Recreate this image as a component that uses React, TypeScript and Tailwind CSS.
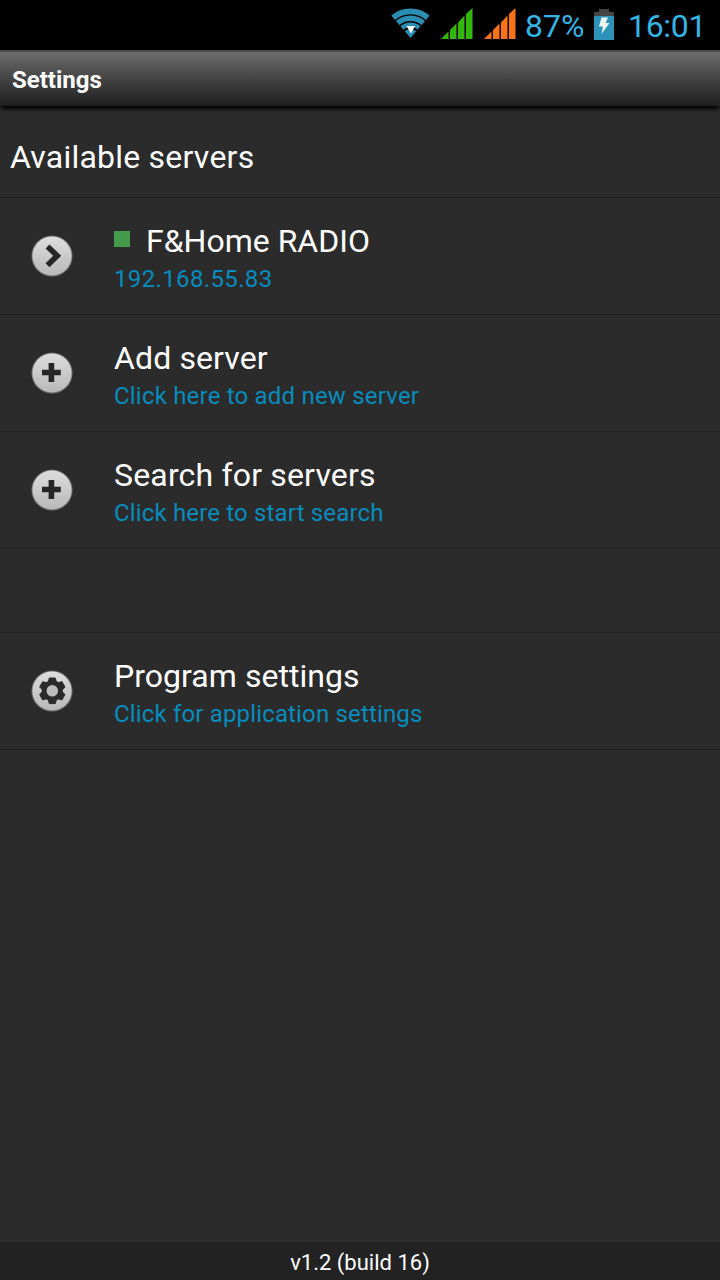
import React from "react";

type IconName = "arrow" | "plus" | "gear";

type Entry = {
  title: string;
  subtitle: string;
  icon: IconName;
  online?: boolean;
  titleClass: string;
  subtitleClass: string;
};

const servers: Entry[] = [
  {
    title: "F&Home RADIO",
    subtitle: "192.168.55.83",
    icon: "arrow",
    online: true,
    titleClass: "tracking-normal",
    subtitleClass: "tracking-[0.36px]",
  },
  {
    title: "Add server",
    subtitle: "Click here to add new server",
    icon: "plus",
    titleClass: "tracking-[0.12px]",
    subtitleClass: "tracking-[0.2px]",
  },
  {
    title: "Search for servers",
    subtitle: "Click here to start search",
    icon: "plus",
    titleClass: "tracking-[0.17px]",
    subtitleClass: "tracking-[0.16px]",
  },
];

const programSettings: Entry = {
  title: "Program settings",
  subtitle: "Click for application settings",
  icon: "gear",
  titleClass: "tracking-[0.04px]",
  subtitleClass: "tracking-[0.16px]",
};

function Glyph({ name }: { name: IconName }) {
  if (name === "arrow") {
    return (
      <path
        d="M17.5 12.5L27.2 21.8L17.5 31.2"
        fill="none"
        stroke="#262626"
        strokeWidth="5.6"
      />
    );
  }
  if (name === "plus") {
    return (
      <path
        d="M18.6 12h5.6v6.8h6.6v5.4h-6.6v6.8h-5.6v-6.8H12v-5.4h6.6z"
        fill="#262626"
      />
    );
  }
  return (
    <g fill="#2b2b2b">
      {[0, 60, 120, 180, 240, 300].map((angle) => (
        <path
          key={angle}
          d="M18.2 13.5L19.3 9h6L26.4 13.5z"
          stroke="#2b2b2b"
          strokeLinejoin="round"
          transform={`rotate(${angle} 22.3 21.8)`}
        />
      ))}
      <circle cx="22.3" cy="21.8" r="10.6" />
      <circle cx="22.3" cy="21.8" r="5.8" fill="#bdbdbd" />
    </g>
  );
}

function RoundIcon({ name }: { name: IconName }) {
  return (
    <svg className="h-11 w-11 shrink-0" viewBox="0 0 44 44">
      <defs>
        <linearGradient id={`disc-${name}`} x1="0" y1="0" x2="0" y2="1">
          <stop offset="0" stopColor="#dddddd" />
          <stop offset="1" stopColor="#b8b8b8" />
        </linearGradient>
      </defs>
      <circle cx="22" cy="22" r="20.6" fill="#6f6f6f" />
      <circle cx="22" cy="22" r="19.6" fill={`url(#disc-${name})`} />
      <Glyph name={name} />
    </svg>
  );
}

function SignalBars({ className }: { className: string }) {
  return (
    <svg className={className} viewBox="0 0 32 32" fill="currentColor">
      <path d="M0 31L7.5 23.5V31z" />
      <path d="M9 22L15.5 15.5V31H9z" />
      <path d="M17 14.5L23.5 7.5V31H17z" />
      <path d="M25 6L31.5 0V31H25z" />
    </svg>
  );
}

function StatusBar() {
  return (
    <div className="flex h-[50px] shrink-0 items-start bg-black pl-[390px] text-[#33b5e5]">
      <svg className="mt-[7px] h-8 w-[41px] shrink-0" viewBox="0 0 41 32">
        <defs>
          <clipPath id="wifi-fan">
            <path d="M20.5 31L-0.5 6.5V0h42v6.5z" />
          </clipPath>
        </defs>
        <g clipPath="url(#wifi-fan)" fill="none" stroke="#2a8db3">
          <circle cx="20.5" cy="31" r="26.7" strokeWidth="5.8" />
          <circle cx="20.5" cy="31" r="19.7" strokeWidth="5.4" />
          <circle cx="20.5" cy="31" r="13.2" strokeWidth="4.6" />
          <circle cx="20.5" cy="31" r="9" fill="#2a8db3" stroke="none" />
        </g>
        <path d="M16.5 19h8.5L21 26.5z" fill="#ffffff" />
      </svg>
      <SignalBars className="ml-[9.5px] mt-2 h-8 w-8 shrink-0 text-[#32b60a]" />
      <SignalBars className="ml-[11px] mt-2 h-8 w-8 shrink-0 text-[#f97316]" />
      <span className="ml-[9.5px] mt-[6px] w-[69px] shrink-0 text-[32px] leading-10">
        87%
      </span>
      <svg className="mt-[9px] h-8 w-5 shrink-0" viewBox="0 0 20 32">
        <path d="M5 0h10v3h5v4H0V3h5z" fill="#444444" />
        <path d="M0 7h20v24H0z" fill="#2e93b9" />
        <path d="M7.5 8.5h6.5L11.5 14H15.5L7.5 25L9 17.5H5z" fill="#eef6fa" />
      </svg>
      <span className="ml-[14px] mt-[6px] shrink-0 text-[32px] leading-10 tracking-[-0.3px]">
        16:01
      </span>
    </div>
  );
}

function SettingsRow({ entry }: { entry: Entry }) {
  return (
    <div className="flex h-[117px] shrink-0 items-center border-b border-[#202020] pl-[30px]">
      <RoundIcon name={entry.icon} />
      <div className="ml-10 whitespace-nowrap pt-[7px]">
        <div className="flex h-[38px] items-center text-[32px] leading-[38px] text-white">
          {entry.online && (
            <span className="mb-1 mr-4 h-4 w-4 shrink-0 bg-[#449b4c]" />
          )}
          <span className={entry.titleClass}>{entry.title}</span>
        </div>
        <div
          className={`text-2xl leading-[38px] text-[#078cbd] ${entry.subtitleClass}`}
        >
          {entry.subtitle}
        </div>
      </div>
    </div>
  );
}

export default function App() {
  return (
    <div className="flex h-[1280px] w-[720px] flex-col overflow-hidden bg-[#2b2b2b] font-['Roboto',sans-serif]">
      <StatusBar />
      <div className="relative flex h-14 shrink-0 items-center border-t-2 border-[#4c4c4c] bg-linear-to-b from-[#6c6c6c] to-[#1f1f1f] pl-3 pt-[2px] shadow-[0_4px_4px_-1px_#000000]">
        <h1 className="text-2xl font-bold text-white">Settings</h1>
      </div>
      <div className="flex h-[92px] shrink-0 items-center border-b border-[#202020] pl-[10px] pt-[10px] text-[32px] text-white">
        <h2 className="tracking-[0.22px]">Available servers</h2>
      </div>
      {servers.map((server) => (
        <SettingsRow key={server.title} entry={server} />
      ))}
      <div className="h-[84px] shrink-0 border-b border-[#202020]" />
      <SettingsRow entry={programSettings} />
      <div className="mt-auto flex h-[38px] shrink-0 items-center justify-center bg-[#222222] pt-[2px] text-[22px] text-white">
        v1.2 (build 16)
      </div>
    </div>
  );
}
